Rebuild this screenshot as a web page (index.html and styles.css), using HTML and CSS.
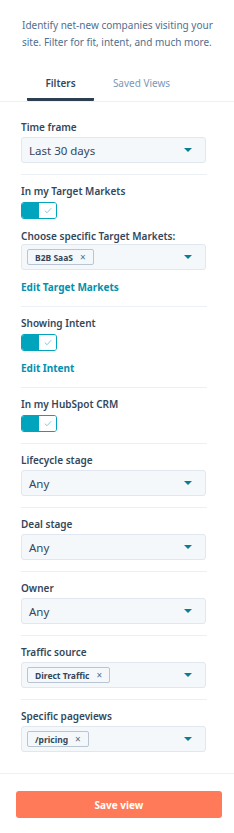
FILE: index.html
```html
<!DOCTYPE html>
<html>
<head>
<meta charset="utf-8">
<link rel="stylesheet" href="styles.css">
</head>
<body>
<div class="panel">
  <p class="desc">Identify net-new companies visiting your site. Filter for fit, intent, and much more.</p>
  <div class="tabs">
    <div class="tab active">Filters</div>
    <div class="tab">Saved Views</div>
  </div>
  <div class="filters">
    <section class="sec">
      <div class="label">Time frame</div>
      <div class="select"><span class="value">Last 30 days</span><span class="caret"></span></div>
    </section>
    <section class="sec">
      <div class="label">In my Target Markets</div>
      <div class="toggle"><span class="on"></span><span class="knob"><svg viewBox="0 0 10 8" width="8" height="7"><path d="M1 4.2 L3.8 6.8 L9 1.2" fill="none" stroke="#7fc8d6" stroke-width="1.2"/></svg></span></div>
      <div class="label sub">Choose specific Target Markets:</div>
      <div class="select"><span class="tag">B2B SaaS <span class="x">×</span></span><span class="caret"></span></div>
      <a class="link">Edit Target Markets</a>
    </section>
    <section class="sec">
      <div class="label">Showing Intent</div>
      <div class="toggle"><span class="on"></span><span class="knob"><svg viewBox="0 0 10 8" width="8" height="7"><path d="M1 4.2 L3.8 6.8 L9 1.2" fill="none" stroke="#7fc8d6" stroke-width="1.2"/></svg></span></div>
      <a class="link">Edit Intent</a>
    </section>
    <section class="sec">
      <div class="label">In my HubSpot CRM</div>
      <div class="toggle"><span class="on"></span><span class="knob"><svg viewBox="0 0 10 8" width="8" height="7"><path d="M1 4.2 L3.8 6.8 L9 1.2" fill="none" stroke="#7fc8d6" stroke-width="1.2"/></svg></span></div>
    </section>
    <section class="sec">
      <div class="label">Lifecycle stage</div>
      <div class="select"><span class="value">Any</span><span class="caret"></span></div>
    </section>
    <section class="sec">
      <div class="label">Deal stage</div>
      <div class="select"><span class="value">Any</span><span class="caret"></span></div>
    </section>
    <section class="sec">
      <div class="label">Owner</div>
      <div class="select"><span class="value">Any</span><span class="caret"></span></div>
    </section>
    <section class="sec">
      <div class="label">Traffic source</div>
      <div class="select"><span class="tag">Direct Traffic <span class="x">×</span></span><span class="caret"></span></div>
    </section>
    <section class="sec last">
      <div class="label">Specific pageviews</div>
      <div class="select"><span class="tag">/pricing <span class="x">×</span></span><span class="caret"></span></div>
    </section>
  </div>
  <div class="footer">
    <button class="save">Save view</button>
  </div>
</div>
</body>
</html>
```

FILE: styles.css
```css
* { box-sizing: border-box; }
html, body { margin: 0; padding: 0; background: #fff; }
body {
  font-family: "Noto Sans", "Open Sans", sans-serif;
  color: #33475b;
  width: 234px;
  height: 833px;
  overflow: hidden;
}
.panel { display: flex; flex-direction: column; }
.desc {
  margin: 0;
  padding: 17px 12px 0 22px;
  font-size: 10px;
  line-height: 17px;
  color: #516f90;
}
.tabs {
  display: flex;
  margin-top: 24px;
  padding-left: 27px;
  border-bottom: 1px solid #eef1f4;
}
.tab {
  font-size: 10px;
  line-height: 16px;
  padding: 0 0 7px;
  text-align: center;
  color: #7c98b6;
  border-bottom: 3px solid transparent;
}
.tab.active {
  width: 67px;
  color: #33475b;
  font-weight: 600;
  border-bottom-color: #2d3e50;
  border-radius: 1px;
}
.tab:not(.active) { width: 95px; }
.filters { margin-top: 9px; padding: 0 27px 0 21px; }
.sec {
  display: flex;
  flex-direction: column;
  align-items: flex-start;
  padding: 8px 0 11px;
  border-bottom: 1px solid #eaf0f6;
}
.sec.last { border-bottom: none; padding-bottom: 21px; }
.label {
  font-size: 10px;
  line-height: 16px;
  font-weight: 600;
  color: #33475b;
  margin-bottom: 2px;
}
.label.sub { margin-top: 9px; margin-bottom: 0; }
.select {
  width: 185px;
  height: 26px;
  background: #f5f8fa;
  border: 1px solid #e1e7ee;
  border-radius: 3px;
  display: flex;
  align-items: center;
  justify-content: space-between;
  padding: 0 13px 0 7px;
}
.value { font-size: 11.5px; color: #33475b; }
.caret {
  width: 0; height: 0;
  border-left: 4px solid transparent;
  border-right: 4px solid transparent;
  border-top: 4px solid #0b7c93;
}
.tag {
  margin-left: -2px;
  height: 16px;
  display: inline-flex;
  align-items: center;
  gap: 7px;
  padding: 0 7px 0 7px;
  background: #f5f8fa;
  border: 1px solid #b9c5d2;
  border-radius: 2px;
  font-size: 8.5px;
  font-weight: 700;
  color: #33475b;
}
.tag .x { font-weight: 400; font-size: 10px; color: #516f90; }
.toggle {
  margin-top: 1px;
  width: 36px;
  height: 17px;
  border: 1px solid #00a4bd;
  border-radius: 3px;
  display: flex;
  overflow: hidden;
}
.toggle .on { width: 17px; background: #00a4bd; }
.toggle .knob {
  flex: 1;
  background: #fff;
  display: flex;
  align-items: center;
  justify-content: center;
}
.link {
  margin-top: 9px;
  font-size: 10px;
  line-height: 16px;
  font-weight: 700;
  color: #0091ae;
}
.footer {
  border-top: 1px solid #eaf0f6;
  padding: 17px 12px 0 16px;
}
.save {
  width: 206px;
  height: 27px;
  border: none;
  border-radius: 3px;
  background: #ff7a59;
  color: #fff;
  font-family: inherit;
  font-size: 10px;
  font-weight: 700;
}
```
